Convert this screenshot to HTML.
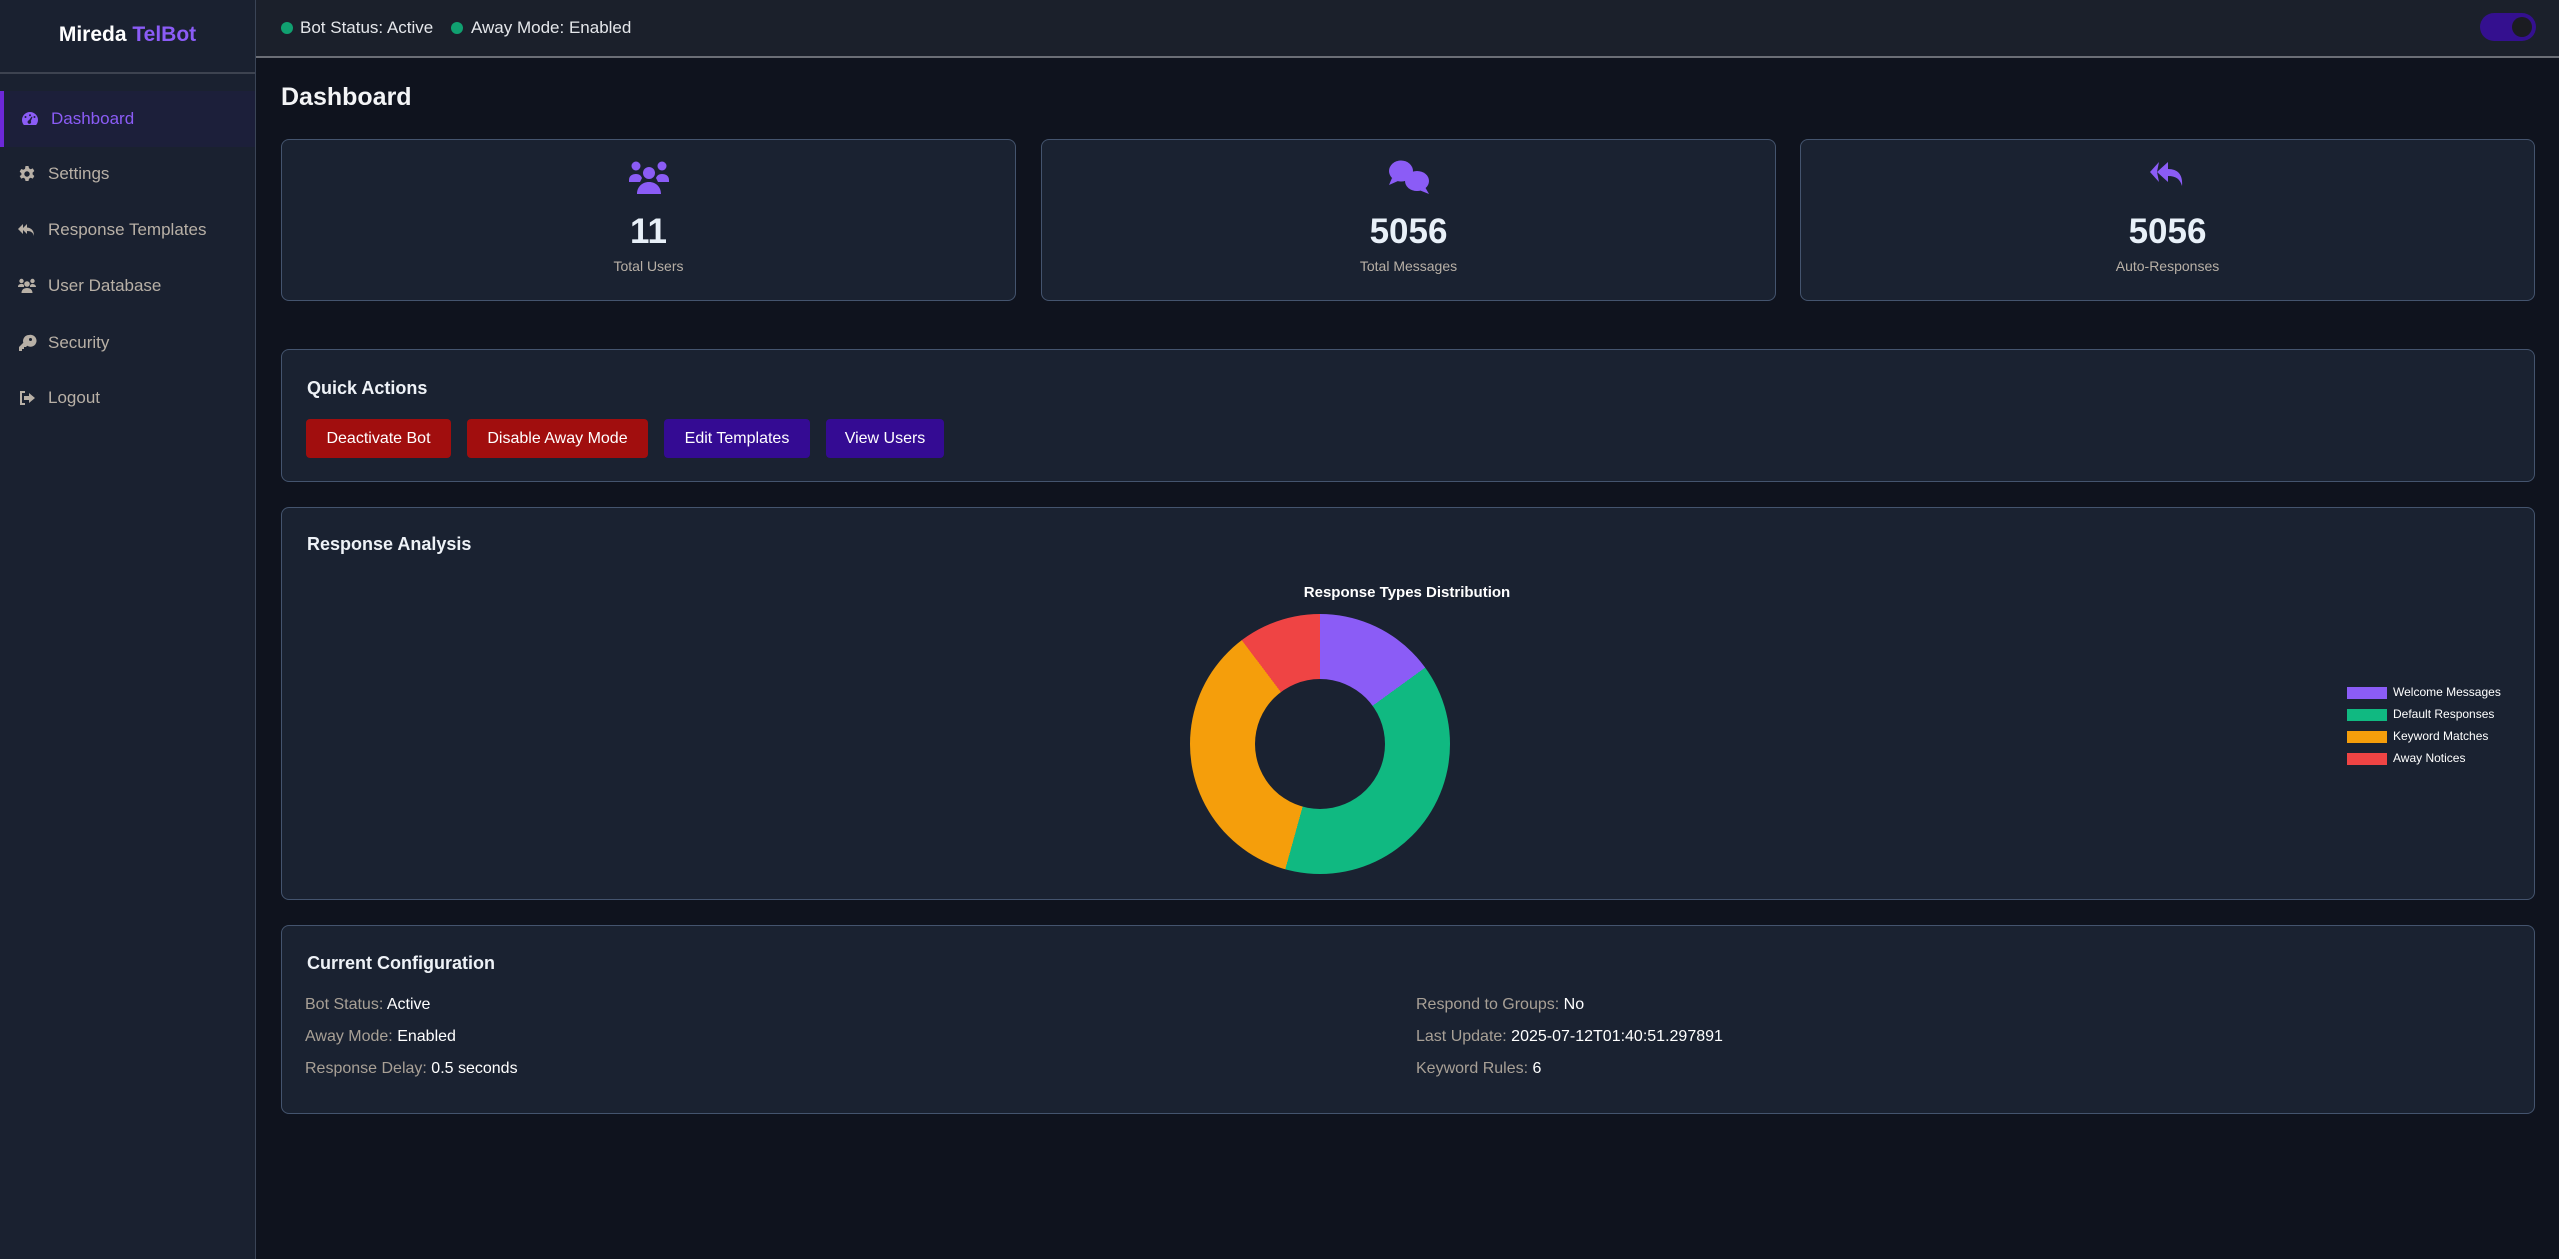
<!DOCTYPE html>
<html><head><meta charset="utf-8"><style>
*{box-sizing:border-box;margin:0;padding:0}
body{width:2559px;height:1259px;background:#0f131e;font-family:"Liberation Sans",sans-serif;color:#e5e7eb;position:relative;overflow:hidden}
.side{position:absolute;left:0;top:0;width:256px;height:1259px;background:#1a2130;border-right:1px solid #3a4456}
.brand{height:74px;border-bottom:2px solid #3d4350;text-align:center;font-weight:bold;font-size:21px;line-height:70px;color:#fff}
.brand span{color:#8b5cf6}
.nav{position:absolute;left:0;width:255px;height:56px;display:flex;align-items:center;font-size:17px;color:#b8b0a6}
.nav svg{position:absolute;left:17px;width:20px;height:20px;fill:#b8b0a6}
.nav span{position:absolute;left:48px}
.nav.act{background:#1c1f3a;border-left:4px solid #6d28d9;color:#8b5cf6}
.nav.act svg{fill:#8b5cf6;left:16px}
.nav.act span{left:47px}
.head{position:absolute;left:256px;top:0;right:0;height:58px;background:#1b202b;border-bottom:2px solid #6b6e76}
.st{position:absolute;top:18px;font-size:17px;color:#e5e7eb}
.dot{position:absolute;top:22px;width:12px;height:12px;border-radius:50%;background:#10a070}
.tog{position:absolute;left:2480px;top:13px;width:56px;height:28px;border-radius:14px;background:#34108f}
.tog i{position:absolute;right:4px;top:4px;width:20px;height:20px;border-radius:50%;background:#1b1c21}
h1{position:absolute;left:281px;top:83px;font-size:25px;color:#f3f4f6;font-weight:bold}
.card{position:absolute;background:#1a2231;border:1.5px solid #44546e;border-radius:8px}
.stat{top:139px;height:162px;width:735px;text-align:center}
.stat svg{position:absolute;left:50%;top:20px;transform:translateX(-50%);fill:#8b5cf6}
.num{position:absolute;left:0;right:0;top:72px;font-size:35px;font-weight:bold;color:#e8f0f8}
.lbl{position:absolute;left:0;right:0;top:118px;font-size:14px;color:#b8b0a6}
.ct{position:absolute;left:25px;font-size:18px;font-weight:bold;color:#eef2f7}
.btn{position:absolute;top:69px;height:39px;border-radius:4px;font-size:16px;color:#fff;text-align:center;line-height:39px}
.r{background:#a10e0e}.p{background:#340b93}
.cfg{position:absolute;font-size:16px;color:#a8a096}
.cfg b{font-weight:normal;color:#fff}
.lg{position:absolute;left:2347px;font-size:12px;color:#fff;height:14px;line-height:14px}
.lg i{display:inline-block;width:40px;height:12px;vertical-align:middle;margin-right:6px}
</style></head><body>
<div class="side">
<div class="brand">Mireda <span>TelBot</span></div>
<div class="nav act" style="top:91px"><svg viewBox="0 0 20 20"><path d="M10 3a8 8 0 0 0-8 8c0 2 .7 3.7 1.9 5h12.2A8 8 0 0 0 18 11a8 8 0 0 0-8-8zm0 2.2a1 1 0 1 1 0 2 1 1 0 0 1 0-2zM5.5 7a1 1 0 1 1 0 2 1 1 0 0 1 0-2zm9 0a1 1 0 1 1 0 2 1 1 0 0 1 0-2zM12.5 8 10.8 12A1.8 1.8 0 1 1 9 11.3L11.6 7.6z"/></svg><span>Dashboard</span></div>
<div class="nav" style="top:146px"><svg viewBox="0 0 20 20"><path d="M8.5 2h3l.5 2.3 1.6.9 2.2-.8 1.5 2.6-1.7 1.6v1.8l1.7 1.6-1.5 2.6-2.2-.8-1.6.9-.5 2.3h-3l-.5-2.3-1.6-.9-2.2.8-1.5-2.6L4.4 11V9.2L2.7 7.6 4.2 5l2.2.8L8 4.9zM10 7.3a2.7 2.7 0 1 0 0 5.4 2.7 2.7 0 0 0 0-5.4z"/></svg><span>Settings</span></div>
<div class="nav" style="top:202px"><svg viewBox="0 0 20 20"><path d="M6 4 1 9l5 5v-3zM10 4 5 9l5 5v-3c4 0 6 1.5 7 5 0-5-2-8-7-8.5z"/></svg><span>Response Templates</span></div>
<div class="nav" style="top:258px"><svg viewBox="0 0 20 20"><circle cx="4.5" cy="5" r="2.2"/><circle cx="15.5" cy="5" r="2.2"/><circle cx="10" cy="8" r="2.8"/><path d="M1 11c0-2 1-3 3.5-3S7 9 7 10v1zM13 10c0-1 1-2 2.5-2S19 9 19 11h-6zM4.5 17c0-3 2-5 5.5-5s5.5 2 5.5 5z"/></svg><span>User Database</span></div>
<div class="nav" style="top:315px"><svg viewBox="0 0 20 20"><path d="M12 2a6 6 0 0 0-5.7 7.8L2 14v4h3v-2h2v-2h2l1.2-1.2A6 6 0 1 0 12 2zm1.5 3a1.5 1.5 0 1 1 0 3 1.5 1.5 0 0 1 0-3z"/></svg><span>Security</span></div>
<div class="nav" style="top:370px"><svg viewBox="0 0 20 20"><path d="M3 3h5v2H5v10h3v2H3zM12 5l6 5-6 5v-3H7V8h5z"/></svg><span>Logout</span></div>
</div>
<div class="head">
<i class="dot" style="left:25px"></i><span class="st" style="left:44px">Bot Status: Active</span>
<i class="dot" style="left:195px"></i><span class="st" style="left:215px">Away Mode: Enabled</span>
</div>
<div class="tog"><i></i></div>
<h1>Dashboard</h1>
<div class="card stat" style="left:281px"><svg width="40" height="34" viewBox="0 0 40 34" style="top:20px"><circle cx="7" cy="6" r="4.5"/><circle cx="33" cy="6" r="4.5"/><circle cx="20" cy="13" r="6"/><path d="M0 20c0-4 3-6 7-6s5 2 6 4l-2 4H0zM27 18c1-2 2-4 6-4s7 2 7 6v2H29zM8 34c0-7 5-12 12-12s12 5 12 12z"/></svg><div class="num">11</div><div class="lbl">Total Users</div></div>
<div class="card stat" style="left:1041px"><svg width="42" height="34" viewBox="0 0 42 34" style="top:20px"><ellipse cx="13" cy="11" rx="12" ry="10.5"/><path d="M4 18 1 25l9-4z"/><ellipse cx="29" cy="21" rx="12" ry="10"/><path d="M37 27l4 7-10-4z"/></svg><div class="num">5056</div><div class="lbl">Total Messages</div></div>
<div class="card stat" style="left:1800px"><svg width="38" height="34" viewBox="0 0 38 34" style="top:20px"><path d="M10 2 1 12l9 10-2-10zM19 2 8 12l11 10v-6c8 0 12 3 14 10 1-10-3-17-14-17z"/></svg><div class="num">5056</div><div class="lbl">Auto-Responses</div></div>

<div class="card" style="left:281px;top:349px;width:2254px;height:133px">
<div class="ct" style="top:28px">Quick Actions</div>
<div class="btn r" style="left:24px;width:145px">Deactivate Bot</div>
<div class="btn r" style="left:185px;width:181px">Disable Away Mode</div>
<div class="btn p" style="left:382px;width:146px">Edit Templates</div>
<div class="btn p" style="left:544px;width:118px">View Users</div>
</div>

<div class="card" style="left:281px;top:507px;width:2254px;height:393px">
<div class="ct" style="top:26px">Response Analysis</div>
</div>
<div style="position:absolute;left:1197px;top:584px;width:420px;text-align:center;font-size:15px;font-weight:bold;color:#fff">Response Types Distribution</div>
<div style="position:absolute;left:1190px;top:614px;width:260px;height:260px;border-radius:50%;background:conic-gradient(#8b5cf6 0 54deg,#10b981 0 195.5deg,#f59e0b 0 323deg,#ef4444 0)"></div>
<div style="position:absolute;left:1255px;top:679px;width:130px;height:130px;border-radius:50%;background:#1a2231"></div>
<div class="lg" style="top:685px"><i style="background:#8b5cf6"></i>Welcome Messages</div>
<div class="lg" style="top:707px"><i style="background:#10b981"></i>Default Responses</div>
<div class="lg" style="top:729px"><i style="background:#f59e0b"></i>Keyword Matches</div>
<div class="lg" style="top:751px"><i style="background:#ef4444"></i>Away Notices</div>

<div class="card" style="left:281px;top:925px;width:2254px;height:189px">
<div class="ct" style="top:27px">Current Configuration</div>
</div>
<div class="cfg" style="left:305px;top:996px">Bot Status: <b>Active</b></div>
<div class="cfg" style="left:305px;top:1028px">Away Mode: <b>Enabled</b></div>
<div class="cfg" style="left:305px;top:1060px">Response Delay: <b>0.5 seconds</b></div>
<div class="cfg" style="left:1416px;top:996px">Respond to Groups: <b>No</b></div>
<div class="cfg" style="left:1416px;top:1028px">Last Update: <b>2025-07-12T01:40:51.297891</b></div>
<div class="cfg" style="left:1416px;top:1060px">Keyword Rules: <b>6</b></div>
</body></html>
